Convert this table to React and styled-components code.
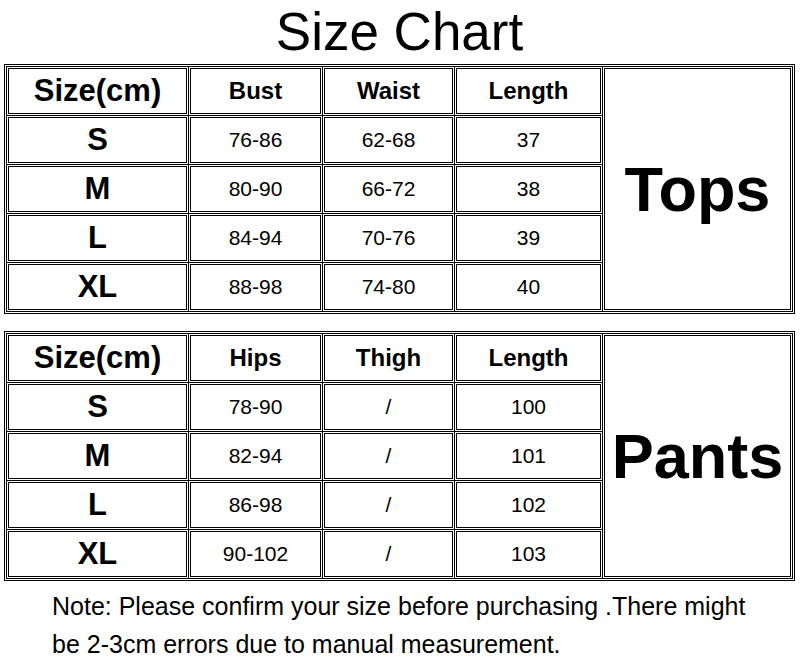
import styled, { createGlobalStyle } from "styled-components";

const GlobalStyle = createGlobalStyle`
    html, body {
        margin: 0;
        padding: 0;
        background: #fff;
    }
    body {
        font-family: "Liberation Sans", Arial, sans-serif;
        color: #000;
    }
`

const Page = styled.div`
    width: 800px;
    height: 662px;
    padding-left: 4px;
    box-sizing: border-box;
    overflow: hidden;
`

const Title = styled.h1`
    margin: 0;
    height: 64px;
    width: 791px;
    line-height: 64px;
    font-size: 53px;
    font-weight: 400;
    text-align: center;
`

const Frame = styled.div`
    width: 791px;
    box-sizing: border-box;
    border: 1px solid #000;
    padding: 1px;
    background: #fff;
    & + & {
        margin-top: 17px;
    }
`

const Grid = styled.div`
    display: grid;
    grid-template-columns: 181px 133px 131px 147px 189px;
    grid-auto-rows: 48px;
    gap: 1px;
    background: #000;
    border: 1px solid #000;
`

const Cell = styled.div`
    display: flex;
    align-items: center;
    justify-content: center;
    background: #fff;
    border: 1px solid #fff;
    box-shadow: inset 0 0 0 1px #000;
    font-size: ${(p) => p.$size || 21}px;
    font-weight: ${(p) => (p.$bold ? 700 : 400)};
    white-space: nowrap;
`

const SideCell = styled(Cell)`
    grid-column: 5;
    grid-row: 1 / span 5;
    font-size: 63px;
    font-weight: 700;
`

const Note = styled.p`
    margin: 6px 0 0 48px;
    width: 704px;
    font-size: 25px;
    line-height: 38px;
`

const tops = {
    label: "Tops",
    head: ["Bust", "Waist", "Length"],
    rows: [
        ["S", "76-86", "62-68", "37"],
        ["M", "80-90", "66-72", "38"],
        ["L", "84-94", "70-76", "39"],
        ["XL", "88-98", "74-80", "40"],
    ],
}

const pants = {
    label: "Pants",
    head: ["Hips", "Thigh", "Length"],
    rows: [
        ["S", "78-90", "/", "100"],
        ["M", "82-94", "/", "101"],
        ["L", "86-98", "/", "102"],
        ["XL", "90-102", "/", "103"],
    ],
}

const SizeTable = ({ data }) => (
    <Frame>
        <Grid>
            <Cell $bold $size={31}>Size(cm)</Cell>
            {data.head.map((h) => (
                <Cell key={h} $bold $size={24}>{h}</Cell>
            ))}
            <SideCell>{data.label}</SideCell>
            {data.rows.map((row) =>
                row.map((v, i) =>
                    i === 0 ? (
                        <Cell key={row[0] + i} $bold $size={31}>{v}</Cell>
                    ) : (
                        <Cell key={row[0] + i}>{v}</Cell>
                    )
                )
            )}
        </Grid>
    </Frame>
)

const App = () => {
    return (<>
        <GlobalStyle/>
        <Page>
            <Title>Size Chart</Title>
            <SizeTable data={tops}/>
            <SizeTable data={pants}/>
            <Note>
                Note: Please confirm your size before purchasing .There might be 2-3cm errors due to manual measurement.
            </Note>
        </Page>
    </>)
}

export default App;
